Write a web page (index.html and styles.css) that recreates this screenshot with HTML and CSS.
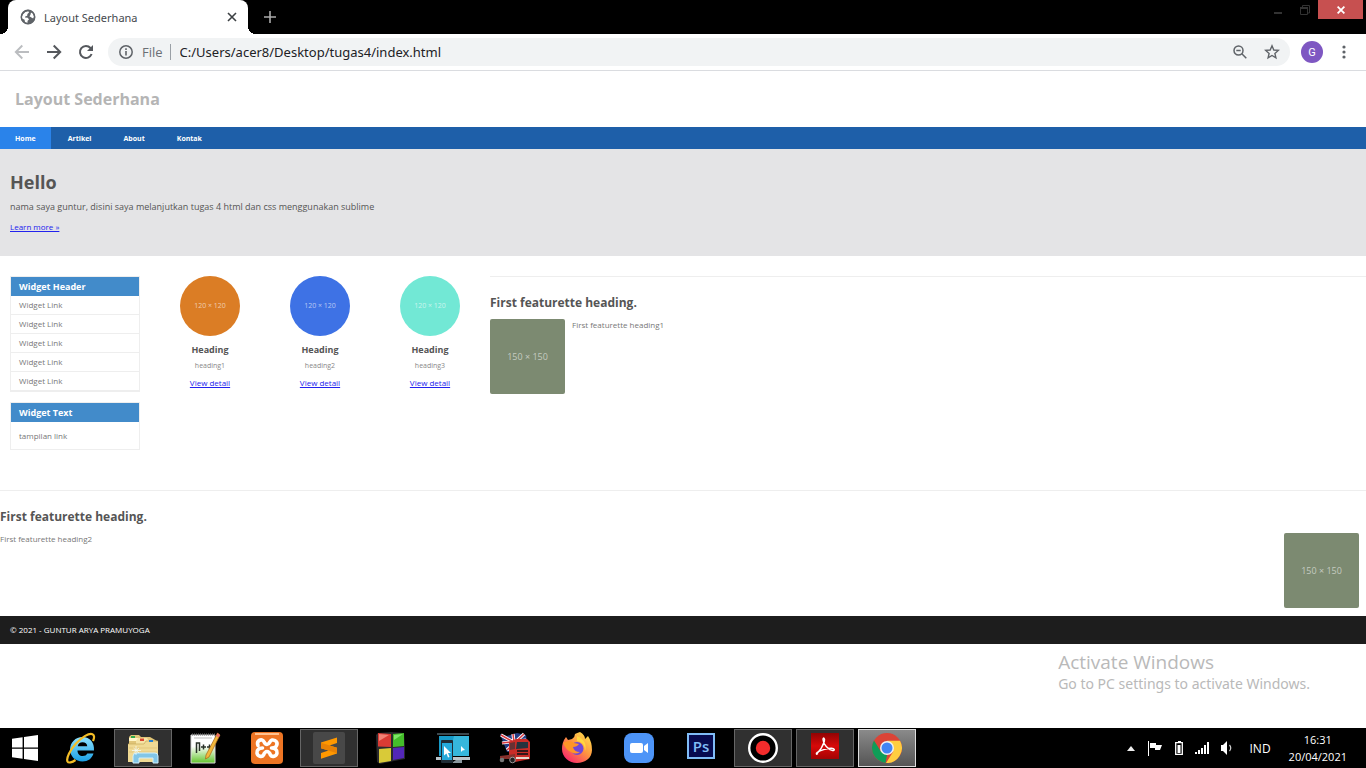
FILE: index.html
```html
<!DOCTYPE html>
<html lang="id">
<head>
<meta charset="utf-8">
<meta name="viewport" content="width=device-width, initial-scale=1">
<title>Layout Sederhana</title>
<link rel="stylesheet" href="styles.css">
</head>
<body class="desktop">

<header class="browser">
  <div class="tabstrip">
    <div class="tab">
      <svg class="tab-icon" width="16" height="16" viewBox="0 0 16 16" aria-hidden="true"><circle cx="8" cy="8" r="7.2" fill="#5f6368"/><path d="M2 7.6 3 5.2 5.4 3 8.4 2.200 9 3.600 7.400 5 7.200 6.800 5.200 7.400 5 8.600 7.800 8.800 9 10.400 7.600 11.800 7.400 14 5 13.200 4.600 10.800 2 9.400Z" fill="#fff"/><path d="M11 3.400 12.800 4.600 14 7.600 13.200 9.600 11.400 8.600 9.400 7.200 10.400 6Z" fill="#fff"/><circle cx="8" cy="8" r="6.700" fill="none" stroke="#5f6368" stroke-width="1.500"/></svg>
      <span class="tab-title">Layout Sederhana</span>
      <button class="icon-button tab-close" aria-label="Close tab"><svg width="10" height="10" viewBox="0 0 10 10"><path d="M1 1 9 9M9 1 1 9" stroke="#3c4043" stroke-width="1.6"/></svg></button>
    </div>
    <button class="icon-button new-tab" aria-label="New tab"><svg width="12" height="12" viewBox="0 0 12 12"><path d="M6 0V12M0 6H12" stroke="#aaa" stroke-width="1.6"/></svg></button>
    <div class="window-controls">
      <button class="icon-button control" aria-label="Minimize"><svg width="8" height="12" viewBox="0 0 8 12"><path d="M0 9H8" stroke="#333" stroke-width="2"/></svg></button>
      <button class="icon-button control" aria-label="Restore"><svg width="10" height="10" viewBox="0 0 10 10" fill="none" stroke="#333"><path d="M2.500 2V.5H9.500V8H8"/><path d="M.5 3H7.500V9.500H.5Z"/><path d="M0 3H8" stroke-width="2"/></svg></button>
      <button class="icon-button control close" aria-label="Close"><svg width="8" height="8" viewBox="0 0 8 8"><path d="M.6.6 7.400 7.400M7.400.6.6 7.400" stroke="#fff" stroke-width="1.800"/></svg></button>
    </div>
  </div>
  <div class="toolbar">
    <button class="icon-button nav-button" aria-label="Back"><svg width="16" height="16" viewBox="0 0 16 16" fill="none" stroke="#bbbdc0" stroke-width="1.900"><path d="M15 8H2.200M8.300 1.500 1.800 8 8.300 14.500"/></svg></button>
    <button class="icon-button nav-button" aria-label="Forward"><svg width="16" height="16" viewBox="0 0 16 16" fill="none" stroke="#55585d" stroke-width="2"><path d="M1 8H13.800M7.700 1.500 14.200 8 7.700 14.500"/></svg></button>
    <button class="icon-button nav-button" aria-label="Reload"><svg width="16" height="16" viewBox="0 0 16 16"><path d="M13.600 10A6 6 0 1 1 12.500 4L13 4.600" fill="none" stroke="#55585d" stroke-width="2"/><path d="M15 1V7H9Z" fill="#55585d"/></svg></button>
    <div class="omnibox">
      <svg width="14" height="14" viewBox="0 0 14 14" aria-hidden="true"><circle cx="7" cy="7" r="6.200" fill="none" stroke="#5f6368" stroke-width="1.500"/><path d="M7 6V10.500M7 3.300V4.900" stroke="#5f6368" stroke-width="1.600"/></svg>
      <label class="scheme" for="address">File</label>
      <input class="address" id="address" type="text" value="C:/Users/acer8/Desktop/tugas4/index.html">
      <button class="icon-button omni-action" aria-label="Zoom"><svg width="14" height="14" viewBox="0 0 14 14" fill="none" stroke="#5f6368" stroke-width="1.500"><circle cx="5.500" cy="5.500" r="4.500"/><path d="M8.800 8.800 13.300 13.300M3.300 5.500H7.700"/></svg></button>
      <button class="icon-button omni-action" aria-label="Bookmark this tab"><svg width="16" height="16" viewBox="0 0 16 16"><path d="M8 1.800 9.800 6 14.300 6.400 10.900 9.400 11.900 13.800 8 11.500 4.100 13.800 5.100 9.400 1.700 6.400 6.200 6Z" fill="none" stroke="#5f6368" stroke-width="1.400"/></svg></button>
    </div>
    <button class="avatar" aria-label="Profile G">G</button>
    <button class="icon-button menu" aria-label="Menu"><svg width="4" height="14" viewBox="0 0 4 14" fill="#5f6368"><circle cx="2" cy="2" r="1.600"/><circle cx="2" cy="7" r="1.600"/><circle cx="2" cy="12" r="1.600"/></svg></button>
  </div>
</header>

<main class="page">
  <div class="brand"><h1 class="brand-title">Layout Sederhana</h1></div>
  <nav class="site-nav">
    <a class="nav-link active" href="#">Home</a>
    <a class="nav-link" href="#">Artikel</a>
    <a class="nav-link" href="#">About</a>
    <a class="nav-link" href="#">Kontak</a>
  </nav>
  <section class="hero">
    <h2 class="hero-title">Hello</h2>
    <p class="hero-text">nama saya guntur, disini saya melanjutkan tugas 4 html dan css menggunakan sublime</p>
    <a class="text-link" href="#">Learn more »</a>
  </section>

  <div class="columns">
    <aside class="sidebar">
      <section class="widget">
        <h3 class="widget-title">Widget Header</h3>
        <ul class="widget-list">
          <li><a class="widget-link" href="#">Widget Link</a></li>
          <li><a class="widget-link" href="#">Widget Link</a></li>
          <li><a class="widget-link" href="#">Widget Link</a></li>
          <li><a class="widget-link" href="#">Widget Link</a></li>
          <li><a class="widget-link" href="#">Widget Link</a></li>
        </ul>
      </section>
      <section class="widget">
        <h3 class="widget-title">Widget Text</h3>
        <p class="widget-text">tampilan link</p>
      </section>
    </aside>

    <div class="cards">
      <article class="card">
        <div class="circle orange">120 × 120</div>
        <h3 class="card-title">Heading</h3>
        <p class="card-text">heading1</p>
        <a class="text-link" href="#">View detail</a>
      </article>
      <article class="card">
        <div class="circle blue">120 × 120</div>
        <h3 class="card-title">Heading</h3>
        <p class="card-text">heading2</p>
        <a class="text-link" href="#">View detail</a>
      </article>
      <article class="card">
        <div class="circle mint">120 × 120</div>
        <h3 class="card-title">Heading</h3>
        <p class="card-text">heading3</p>
        <a class="text-link" href="#">View detail</a>
      </article>
    </div>

    <section class="featurette grow">
      <h2 class="featurette-title">First featurette heading.</h2>
      <div class="featurette-body">
        <div class="thumb">150 × 150</div>
        <p class="featurette-text">First featurette heading1</p>
      </div>
    </section>
  </div>

  <section class="featurette">
    <h2 class="featurette-title">First featurette heading.</h2>
    <div class="featurette-body split">
      <p class="featurette-text">First featurette heading2</p>
      <div class="thumb">150 × 150</div>
    </div>
  </section>

  <footer class="site-footer">© 2021 - GUNTUR ARYA PRAMUYOGA</footer>

  <div class="watermark">
    <p class="watermark-title">Activate Windows</p>
    <p class="watermark-text">Go to PC settings to activate Windows.</p>
  </div>
</main>

<footer class="taskbar">
  <button class="start" aria-label="Start"><svg width="26" height="26" viewBox="0 0 26 26" fill="#fff"><path d="M0 3.800 10.600 2.300V12.500H0ZM12 2.100 26 0V12.500H12ZM0 13.700H10.600V23.800L0 22.300ZM12 13.700H26V26L12 24Z"/></svg></button>

  <button class="task" aria-label="Internet Explorer"><svg width="32" height="32" viewBox="0 0 32 32"><defs><linearGradient id="ie" x2="0" y2="1"><stop stop-color="#8fe2ff"/><stop offset="1" stop-color="#1a9fe4"/></linearGradient></defs><path d="M29 18.500H12.500C12.500 22 14.700 24 17.700 24 20 24 21.500 23.200 22.300 21.500H28.500C27 26.500 23 29.500 17.500 29.500 10.500 29.500 5 24.500 5 17.500S10.500 5 17.500 5C25 5 29.500 10.500 29 18.500ZM12.700 14.300H22.300C22 11.700 20.300 10.200 17.600 10.200S13.200 11.700 12.700 14.300Z" fill="url(#ie)"/><path d="M10.500 28C7 30.500 3.500 31.300 2.500 29.500 1 26.500 5 18 11 11.500 17 5 24 .8 27.500 2.200 29.800 3.200 29.300 6 28 9" fill="none" stroke="#f4bd26" stroke-width="2.200"/></svg></button>

  <button class="task open" aria-label="File Explorer"><svg width="32" height="32" viewBox="0 0 32 32"><path d="M2 5 4 3H12L14 5H23L30 9V28H2Z" fill="#e0c578"/><path d="M2 6H13V9H2Z" fill="#fff5c8"/><path d="M4 4H8V6H4Z" fill="#2fa84a"/><path d="M9 9 11 6H20L22 9H31V29H9Z" fill="#f5e3a5"/><path d="M13 6.500H17V9H13Z" fill="#db4a31"/><path d="M1 12H17L19 9H31V30H1Z" fill="#f0da94"/><path d="M1 12H17L19 9H31" fill="none" stroke="#c6a959" stroke-width=".7"/><path d="M22 8H26V10H22Z" fill="#2581d2"/><path d="M2 16H30M2 20H30" stroke="#e3c77d"/><path d="M6 31V24Q6 21 10 21H28Q31 21 31 24V31H26V26H12V31Z" fill="#82c6e7" stroke="#d0effb"/><path d="M9 14V23M5 18.500H14M6.500 16 12 21M12 16 6.500 21" stroke="#f4fdff" stroke-width=".7"/></svg></button>

  <button class="task" aria-label="Notepad++"><svg width="32" height="32" viewBox="0 0 32 32"><defs><linearGradient id="np" x2="0" y2="1"><stop offset=".4" stop-color="#fff"/><stop offset="1" stop-color="#62c52b"/></linearGradient></defs><path d="M2 3H26V31H2Z" fill="url(#np)" stroke="#d6d6d6"/><path d="M3 2.500H26" stroke="#777" stroke-width="2" stroke-dasharray="1 1"/><path d="M5 6H23" stroke="#bbb"/><path d="M7.500 21V11H10.500V19M12 15H17M14.500 12.500V17.500M18 15H23M20.500 12.500V17.500" fill="none" stroke="#293129" stroke-width="1.500"/><path d="M28.500 1 31 3 20 25 16.500 27 17 23Z" fill="#f2b83c" stroke="#a86418" stroke-width=".7"/><path d="M28.500 1 31 3 29.800 5.500 27 4Z" fill="#e96f65"/></svg></button>

  <button class="task" aria-label="XAMPP"><svg width="32" height="32" viewBox="0 0 32 32"><rect width="32" height="32" rx="4" fill="#ed7524"/><path d="M4 2H28" stroke="#ffc18e" stroke-width="2"/><path d="M7 13.500C5.500 10 8 7.500 11 8 13.500 8.500 13 12.500 16 12.500S18.500 8.500 21 8C25 7.500 27.500 11 25 14.500 24 16 22 16 20.500 16 24 16 26.500 18 26 21 25.500 24.500 21 25.500 19.500 23 18.500 20.500 18 19.500 16 19.500S13.500 20.500 12.500 23C11 25.500 6.500 24.500 6 21 5.500 18 8 16 11.500 16" fill="none" stroke="#fff" stroke-width="3.600" stroke-linecap="round" stroke-linejoin="round"/></svg></button>

  <button class="task open" aria-label="Sublime Text"><svg width="32" height="32" viewBox="0 0 32 32"><rect width="32" height="32" rx="2" fill="#484848"/><path d="M8 10.500 24 5.500V11L16.500 13.400 24 15.700V21.500L8 26.800V21L15.500 18.600 8 16.200Z" fill="#ff9800"/><path d="M8 16.200V10.800L24 15.700V21.300Z" fill="#e98205"/></svg></button>

  <button class="task" aria-label="Colour blocks"><svg width="32" height="32" viewBox="0 0 32 32"><path d="M1 3 3 1 16 0 29 1 30 15V27L19 29 5 32 2 30Z" fill="#2a2a2d"/><path d="M3 1 16 2V15L3 14.500Z" fill="#d93b34"/><path d="M18 2 29 1V14L18 15Z" fill="#44bd2a"/><path d="M4 17 16 16V29L4 31Z" fill="#d9ca38"/><path d="M18 16 29 15V26L18 28Z" fill="#5327b7"/><path d="M4 2 14 3 4 9Z" fill="#f28275"/><path d="M19 3 28 2 19 8Z" fill="#7fe669"/></svg></button>

  <button class="task" aria-label="Remote desktop"><svg width="34" height="32" viewBox="0 0 34 32"><path d="M3 4H33V24H3Z" fill="#179ac8"/><path d="M18 4H33V24H13Z" fill="#36b7dc"/><path d="M1 2H33" stroke="#778e99"/><path d="M0 25H34V28H0Z" fill="#bcc5ca"/><path d="M20 28H26V31H17V30Z" fill="#8c989f"/><rect x="5" y="8" width="12" height="23" rx="1" fill="#202c35"/><path d="M6 11H16V28H6Z" fill="#25a9da"/><path d="M8 14 15 21H12L13.500 25 12 25.500 10.500 21.500 8 23.500ZM25 14 29 18 26.500 18.500 25 20Z" fill="#fff"/></svg></button>

  <button class="task" aria-label="UK Truck Simulator"><svg width="32" height="32" viewBox="0 0 32 32"><path d="M1 2 8 4 18 1 27 3 29 17 8 20Z" fill="#263d85"/><path d="M2 3 25 16M25 2 8 18M14 2 16 18M3 11 27 8" stroke="#fff" stroke-width="3.200"/><path d="M2 3 25 16M25 2 8 18M14 2 16 18M3 11 27 8" stroke="#d83a40" stroke-width="1.500"/><path d="M10 10 17 7H28L31 10V27L16 30 10 26Z" fill="#c92c27"/><path d="M18 10H29V16L17 17Z" fill="#25333e"/><path d="M11 11 16 10V17L11 18Z" fill="#673134"/><path d="M1 24 16 22V27H1Z" fill="#87302b"/><path d="M18 19H29M18 22H29" stroke="#351719" stroke-width="2"/><path d="M17 26H30" stroke="#e7d9cf" stroke-width="2"/><circle cx="3" cy="28" r="2.300" fill="#777"/><circle cx="13.500" cy="28" r="2.800" fill="#222" stroke="#999"/></svg></button>

  <button class="task" aria-label="Firefox"><svg width="32" height="32" viewBox="0 0 32 32"><defs><linearGradient id="ff" x1="1" x2=".2" y2="1"><stop stop-color="#fff04d"/><stop offset=".5" stop-color="#ff9640"/><stop offset="1" stop-color="#f8226d"/></linearGradient></defs><path d="M19 0Q24 3 24 7L27 4Q31 10 31 18C31 26 24 31 16 31S1 25 1 17Q1 10 5 5L7 8 11 7Q14 5 14 2Q16 1 19 0Z" fill="url(#ff)"/><circle cx="16" cy="16.500" r="6.500" fill="#7048d8"/><path d="M2 11Q8 7 13 11L18 12Q16 15 12 15 13 20 19 20 14 23 10 20 5 18 2 11Z" fill="#ff9527"/><path d="M16 4Q27 9 24 19 24 10 16 9Z" fill="#ffd83f"/></svg></button>

  <button class="task" aria-label="Zoom"><svg width="30" height="30" viewBox="0 0 30 30"><rect width="30" height="30" rx="8" fill="#4d94f7"/><rect x="6" y="10" width="13" height="10" rx="2" fill="#fff"/><path d="M20 13 24 10V20L20 17Z" fill="#fff"/></svg></button>

  <button class="task raised" aria-label="Photoshop"><span class="photoshop">Ps</span></button>

  <button class="task open" aria-label="Screen recorder"><svg width="30" height="30" viewBox="0 0 30 30"><circle cx="15" cy="15" r="13.800" fill="#000" stroke="#fff" stroke-width="2.400"/><circle cx="15" cy="15" r="7.200" fill="#f42c2c"/></svg></button>

  <button class="task open raised" aria-label="Adobe Reader"><svg width="28" height="26" viewBox="0 0 28 26"><defs><linearGradient id="pdf" x2="0" y2="1"><stop stop-color="#900404"/><stop offset=".5" stop-color="#d80909"/><stop offset="1" stop-color="#a40303"/></linearGradient></defs><path d="M0 0H28V26H0Z" fill="url(#pdf)"/><path d="M6 20.500C8.500 18 12 12.500 13.300 8.500 14.300 5 12 4 12 6.500 12 11 17.500 17.200 21.500 17.500 24.500 17.500 23.500 15.200 20.500 15.200 16 15.200 9 17.500 6.300 19.300 4.500 20.700 5.500 22 6.800 20.500" fill="none" stroke="#fff" stroke-width="1.400"/></svg></button>

  <button class="task open current" aria-label="Google Chrome"><svg width="30" height="30" viewBox="0 0 30 30"><circle cx="15" cy="15" r="15" fill="#db4437"/><path d="M2 7.500 8.900 18.500 15 22 13.500 29.900A15 15 0 0 1 2 7.500Z" fill="#0f9d58"/><path d="M28 7.800H15L21.300 18.500 14 30A15 15 0 0 0 28 7.800Z" fill="#ffcd40"/><circle cx="15" cy="15" r="7" fill="#f1f1f1"/><circle cx="15" cy="15" r="5.500" fill="#4285f4"/></svg></button>

  <div class="tray">
    <svg width="8" height="5" viewBox="0 0 8 5"><path d="M4 0 8 5H0Z" fill="#eee"/></svg>
    <svg width="16" height="15" viewBox="0 0 16 15"><path d="M1.500 0V15" stroke="#fff"/><path d="M3 2H9V4H15L13 9 8 9V7H3Z" fill="#fff"/></svg>
    <svg class="battery" width="8" height="14" viewBox="0 0 8 14"><path d="M3 0H6V2H3Z" fill="#fff"/><path d="M.7 1.700H7.300V13.300H.7Z" fill="none" stroke="#fff" stroke-width="1.300"/><path d="M2.500 4H5.500V12H2.500Z" fill="#fff"/></svg>
    <svg width="14" height="12" viewBox="0 0 14 12" fill="#fff"><path d="M0 10H2V12H0ZM3 8H5V12H3ZM6 6H8V12H6ZM9 3H11V12H9ZM12 0H14V12H12Z"/></svg>
    <svg class="sound" width="13" height="14" viewBox="0 0 13 14"><path d="M0 4H2L6 0V14L2 10H0Z" fill="#fff"/><path d="M8.500 4Q11 7 8.500 10" fill="none" stroke="#ccc" stroke-width="1.200"/></svg>
    <span class="language">IND</span>
    <div class="clock"><time>16:31</time><time>20/04/2021</time></div>
  </div>
</footer>
</body>
</html>
```
FILE: styles.css
```css
* {
  box-sizing: border-box;
}

h1, h2, h3, p, ul {
  margin: 0;
  padding: 0;
}

button {
  padding: 0;
  border: 0;
  background: none;
  font-family: inherit;
}

svg {
  display: block;
  flex: none;
}

.desktop {
  display: flex;
  flex-direction: column;
  min-height: 100vh;
  margin: 0;
  background: #fff;
  color: #555;
  font-family: "Open Sans", sans-serif;
}

.icon-button {
  display: flex;
  align-items: center;
  justify-content: center;
}

/* Browser frame */
.tabstrip {
  display: flex;
  height: 34px;
  padding-left: 8px;
  background: #000;
}

.tab {
  position: relative;
  display: flex;
  align-items: center;
  width: 240px;
  padding: 0 11px 0 12px;
  border-radius: 8px 8px 0 0;
  background: #fff;
}

.tab::before,
.tab::after {
  content: "";
  position: absolute;
  bottom: 0;
  width: 8px;
  height: 8px;
}

.tab::before {
  right: 100%;
  background: radial-gradient(circle at 0 0, #000 8px, #fff 8px);
}

.tab::after {
  left: 100%;
  background: radial-gradient(circle at 100% 0, #000 8px, #fff 8px);
}

.tab-title {
  flex: 1;
  margin-left: 8px;
  color: #45494d;
  font-family: "Noto Sans", sans-serif;
  font-size: 11px;
}

.new-tab {
  width: 44px;
}

.window-controls {
  display: flex;
  align-items: flex-start;
  margin-left: auto;
  padding-right: 3px;
}

.control {
  width: 27px;
  height: 19px;
}

.control.close {
  width: 45px;
  background: #c75050;
}

.toolbar {
  display: flex;
  align-items: center;
  height: 37px;
  padding: 0 12px 0 6px;
  border-bottom: 1px solid #dadce0;
}

.nav-button {
  width: 32px;
  height: 28px;
}

.omnibox {
  display: flex;
  flex: 1;
  align-items: center;
  height: 28px;
  margin-left: 6px;
  padding: 0 8px 0 11px;
  border-radius: 14px;
  background: #f1f3f4;
}

.scheme {
  margin-left: 9px;
  padding-right: 7px;
  border-right: 1px solid #9aa0a6;
  color: #6b6f74;
  font-size: 13px;
  line-height: 16px;
}

.address {
  flex: 1;
  min-width: 0;
  padding: 0 0 0 9px;
  border: 0;
  background: none;
  color: #202124;
  font-family: "Noto Sans", sans-serif;
  font-size: 13px;
}

.omni-action {
  width: 32px;
  height: 28px;
}

.omni-action:last-child {
  width: 20px;
  margin-left: 6px;
}

.avatar {
  width: 22px;
  height: 22px;
  margin: 0 11px;
  border-radius: 50%;
  background: #7e57c2;
  color: #fff;
  font-family: Roboto, sans-serif;
  font-size: 11px;
}

.menu {
  width: 20px;
  height: 28px;
}

/* Site */
.page {
  position: relative;
  flex: 1;
}

.brand {
  padding: 16px 15px;
}

.brand-title {
  color: #b5b5b5;
  font-size: 16px;
  line-height: 24px;
}

.site-nav {
  display: flex;
  gap: 2px;
  background: #1e5fa9;
}

.nav-link {
  padding: 2px 15px 0;
  color: #fff;
  font-size: 7px;
  font-weight: 700;
  line-height: 20px;
  text-decoration: none;
}

.nav-link.active {
  background: #2a83ea;
}

.hero {
  padding: 20px 10px 23px;
  background: #e4e4e6;
}

.hero-title {
  margin-bottom: 6px;
  font-size: 18px;
  line-height: 26px;
}

.hero-text {
  margin-bottom: 8px;
  font-size: 9px;
  line-height: 12px;
}

.text-link {
  display: block;
  color: #22e;
  font-size: 8px;
  line-height: 12px;
}

.columns {
  display: flex;
  min-height: 214px;
  margin-top: 20px;
}

.sidebar {
  display: flex;
  flex-direction: column;
  gap: 10px;
  width: 130px;
  margin: 0 15px 0 10px;
}

.widget {
  border: 1px solid #eee;
}

.widget-title {
  padding: 0 8px;
  background: #428bca;
  color: #fff;
  font-size: 9px;
  line-height: 19px;
}

.widget-list {
  list-style: none;
}

.widget-link {
  display: block;
  padding: 0 8px;
  border-bottom: 1px solid #eee;
  color: #777;
  font-size: 8px;
  line-height: 18px;
  text-decoration: none;
}

.widget-text {
  padding: 8px;
  color: #777;
  font-size: 8px;
  line-height: 11px;
}

.cards {
  display: flex;
}

.card {
  width: 110px;
  text-align: center;
}

.circle {
  width: 60px;
  margin: 0 auto 7px;
  border-radius: 50%;
  color: #ffffffa0;
  font-size: 7px;
  line-height: 60px;
}

.orange {
  background: #db7d25;
}

.blue {
  background: #3e72e5;
}

.mint {
  background: #72e8d5;
}

.card-title {
  margin-bottom: 5px;
  font-size: 9px;
  line-height: 13px;
}

.card-text {
  margin-bottom: 6px;
  color: #888;
  font-size: 7px;
  line-height: 10px;
}

.featurette {
  padding-top: 18px;
  border-top: 1px solid #eee;
}

.grow {
  flex: 1;
  margin-left: 5px;
}

.featurette-title {
  margin-bottom: 8px;
  font-size: 12px;
  line-height: 16px;
}

.featurette-body {
  display: flex;
  gap: 7px;
}

.split {
  justify-content: space-between;
  padding: 0 7px 8px 0;
}

.featurette-text {
  color: #777;
  font-size: 8px;
  line-height: 12px;
}

.thumb {
  width: 75px;
  border-radius: 2px;
  background: #7c8a71;
  color: #ffffff90;
  font-size: 9px;
  line-height: 75px;
  text-align: center;
}

.site-footer {
  padding: 0 10px;
  background: #1d1d1d;
  color: #fff;
  font-size: 8px;
  line-height: 28px;
}

.watermark {
  position: absolute;
  right: 56px;
  bottom: 34px;
  color: #b9b9b9;
}

.watermark-title {
  font-size: 19px;
  line-height: 24px;
}

.watermark-text {
  font-family: "Noto Sans", sans-serif;
  font-size: 14px;
  line-height: 20px;
}

/* Taskbar */
.taskbar {
  display: flex;
  gap: 4px;
  height: 40px;
  background: #000;
  color: #fff;
}

.start {
  display: grid;
  place-items: center;
  width: 48px;
  padding-left: 2px;
}

.task {
  display: grid;
  place-items: center;
  width: 58px;
  height: 38px;
  margin-top: 1px;
  border: 1px solid transparent;
}

.raised {
  padding-bottom: 4px;
}

.open {
  border-color: #666;
  background: #303030;
}

.current {
  border-color: #ddd;
  background: linear-gradient(#8a8a8a, #555);
}

.photoshop {
  width: 28px;
  border: 2px solid #80bdf7;
  background: #070b50;
  color: #80bdf7;
  font-size: 15px;
  font-weight: 600;
  line-height: 22px;
}

.tray {
  display: flex;
  align-items: center;
  gap: 12px;
  margin-left: auto;
  padding-right: 19px;
  font-size: 12px;
}

.language {
  margin-left: 4px;
}

.clock {
  display: flex;
  flex-direction: column;
  align-items: center;
  margin-left: 6px;
  font-size: 11px;
  line-height: 17px;
}
```
